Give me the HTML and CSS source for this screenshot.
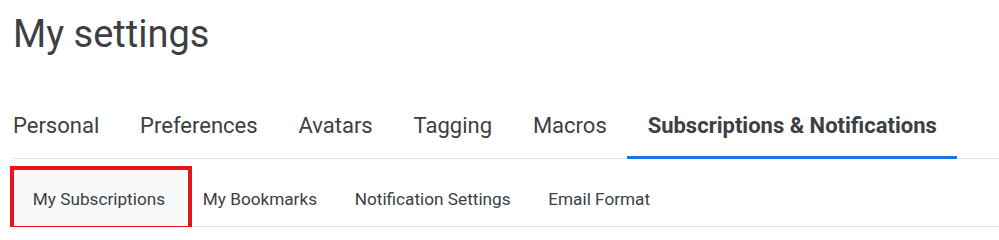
FILE: index.html
```html
<!DOCTYPE html>
<html lang="en">
<head>
<meta charset="utf-8">
<title>My settings</title>
<link rel="stylesheet" href="styles.css">
</head>
<body>
<div class="page">
  <h1 class="title">My settings</h1>
  <nav class="tabs">
    <a class="tab">Personal</a>
    <a class="tab">Preferences</a>
    <a class="tab">Avatars</a>
    <a class="tab">Tagging</a>
    <a class="tab">Macros</a>
    <a class="tab tab-active">Subscriptions &amp; Notifications</a>
  </nav>
  <nav class="subtabs">
    <a class="subtab subtab-active">My Subscriptions</a>
    <a class="subtab">My Bookmarks</a>
    <a class="subtab">Notification Settings</a>
    <a class="subtab">Email Format</a>
  </nav>
</div>
</body>
</html>
```

FILE: styles.css
```css
html, body {
  margin: 0;
  padding: 0;
  background: #ffffff;
}

body {
  font-family: Roboto, "Liberation Sans", Arial, sans-serif;
  color: #3c4043;
}

.page {
  padding-left: 13px;
}

.title {
  margin: 12px 0 0 0;
  font-size: 38px;
  line-height: 44px;
  font-weight: 400;
  color: #3c4043;
}

.tabs {
  display: flex;
  margin-top: 57px;
  border-bottom: 1px solid #dfe1e5;
}

.tab {
  display: block;
  padding: 0 20.45px 17px;
  font-size: 22px;
  line-height: 26px;
  color: #3c4043;
  border-bottom: 3px solid transparent;
  margin-bottom: -1px;
  white-space: nowrap;
}

.tab:first-child {
  padding-left: 0;
}

.tab-active {
  font-weight: 700;
  color: #3c4043;
  border-bottom-color: #1a73e8;
}

.subtabs {
  display: flex;
  margin-top: 11px;
  padding-left: 1px;
  border-bottom: 1px solid #dfe1e5;
}

.subtab {
  display: block;
  padding: 19px 18.85px 17px;
  font-size: 17.2px;
  line-height: 20px;
  color: #3c4043;
  white-space: nowrap;
}

.subtab-active {
  position: relative;
  background: #f8f9fa;
}

.subtab-active::after {
  content: "";
  position: absolute;
  left: -4px;
  top: -4px;
  right: -8px;
  bottom: -4px;
  border: 4px solid #e8141c;
}
```
